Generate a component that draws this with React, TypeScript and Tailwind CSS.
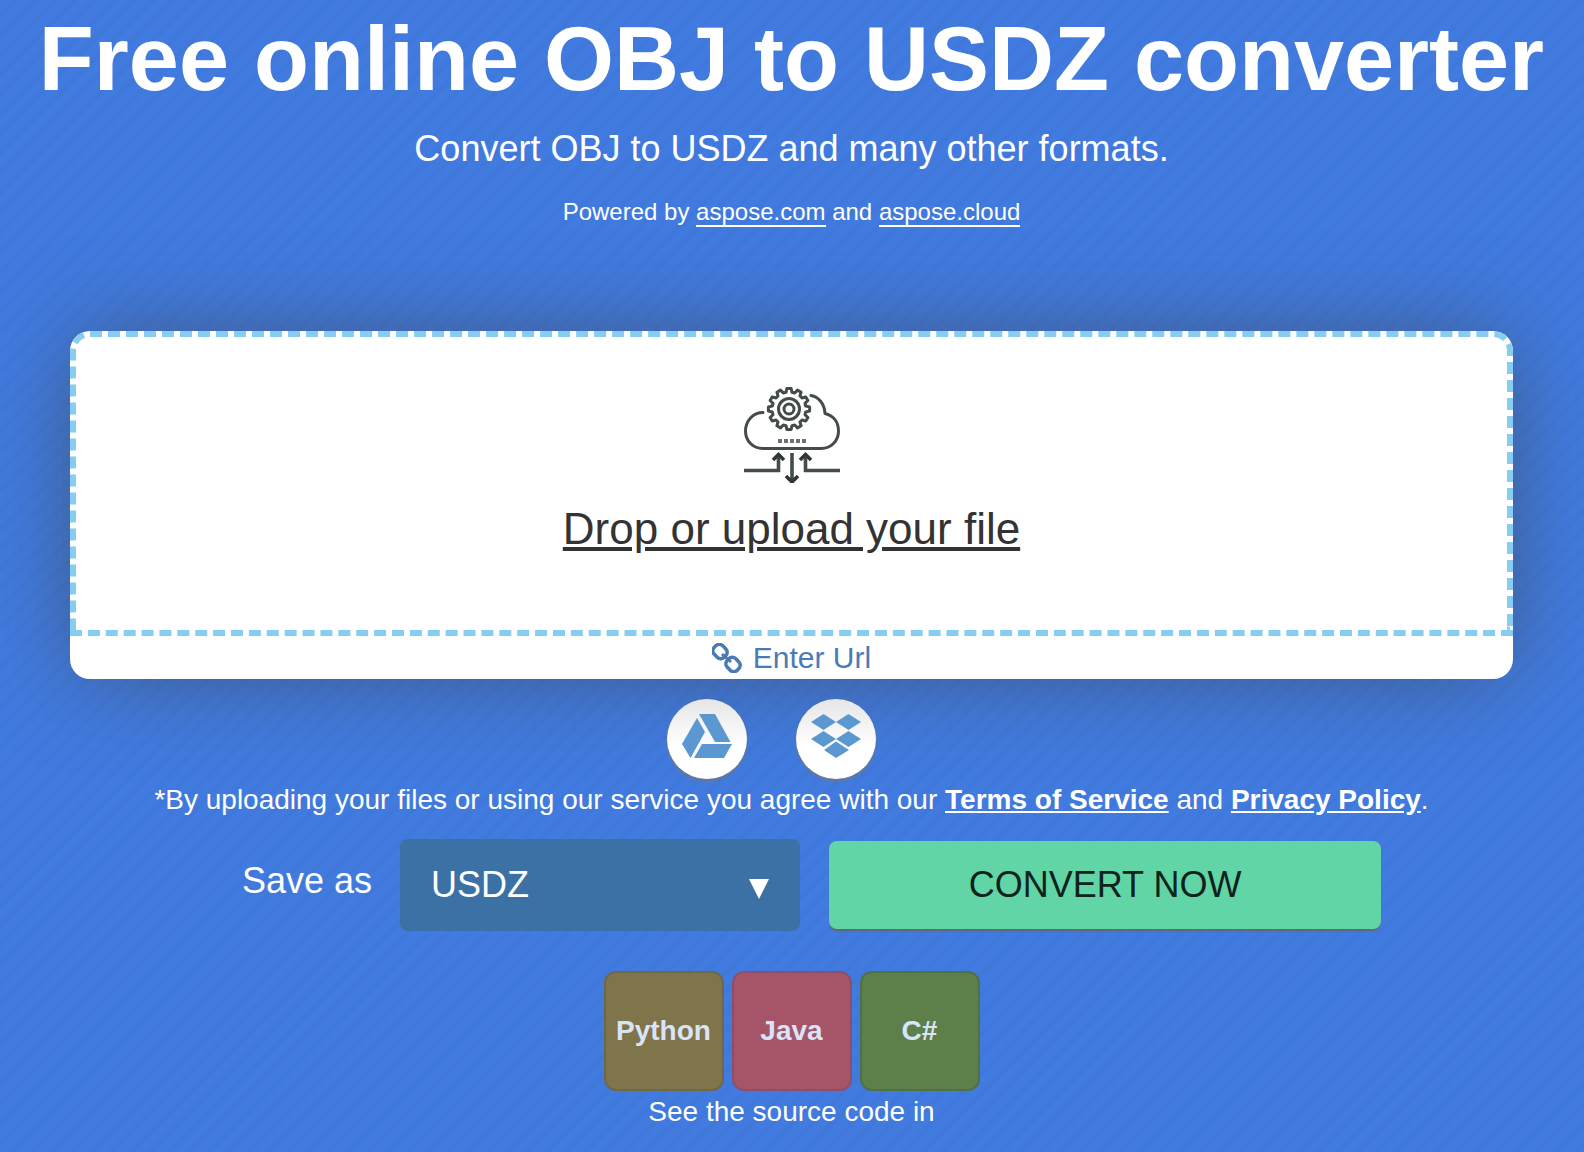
import React from 'react';

const formats = ['USDZ', 'OBJ', 'FBX', 'STL', 'GLB'];

const languages = [
  { name: 'Python', color: 'bg-[#80744a] border-[#6e6748]' },
  { name: 'Java', color: 'bg-[#a65568] border-[#8d4f68]' },
  { name: 'C#', color: 'bg-[#5d7f4a] border-[#507048]' },
];

// Outline of the gear that sits on top of the cloud
const gearPath = () => {
  const teeth = 12;
  const points: string[] = [];
  for (let i = 0; i < teeth; i++) {
    const base = (i * 2 * Math.PI) / teeth - Math.PI / 2;
    [[-0.18, 17], [-0.1, 20.7], [0.1, 20.7], [0.18, 17]].forEach(([offset, radius]) => {
      const x = 45 + radius * Math.cos(base + offset);
      const y = 22 + radius * Math.sin(base + offset);
      points.push(`${x.toFixed(1)} ${y.toFixed(1)}`);
    });
  }
  return `M${points.join('L')}Z`;
};

const CloudIcon = () => (
  <svg viewBox="0 0 96 96" className="h-24 w-24" fill="none" stroke="#434c4a" strokeWidth="3">
    <path d={gearPath()} strokeLinejoin="round" />
    <circle cx="45" cy="22" r="10.5" />
    <circle cx="45" cy="22" r="5" />
    <path
      d="M19 25.5C9 25.5 1.5 34 1.5 44C1.5 54 9 61.5 19 61.5H77C87 61.5 94.5 54 94.5 44C94.5 34.5 89 28.5 81 26.5C80.5 17 75 10 67 8.5"
      strokeLinecap="round"
      strokeLinejoin="round"
    />
    <path d="M34 54H63" stroke="#6b7270" strokeWidth="4" strokeDasharray="4 2" />
    <path d="M0 83.5H34.5V69M96 83.5H61.5V69M48 66V93" strokeWidth="3.6" />
    <path
      d="M29 73L34.5 67.5L40 73M56 73L61.5 67.5L67 73M42 89L48 95L54 89"
      stroke="#2f3836"
      strokeWidth="3.6"
    />
  </svg>
);

const LinkIcon = () => (
  <svg viewBox="0 0 30 30" className="h-[30px] w-[30px]" fill="none" stroke="#4a7bb5" strokeWidth="3.6">
    <rect x="1" y="2.5" width="14" height="12" rx="5" transform="rotate(45 8 8.5)" />
    <rect x="14" y="15.5" width="14" height="12" rx="5" transform="rotate(45 21 21.5)" />
    <path d="M10 11L19 19" strokeWidth="3" />
  </svg>
);

const DriveIcon = () => (
  <svg viewBox="0 0 50 44" className="h-11 w-[50px]" fill="#5b98d2">
    <path d="M17 0H33L48.5 28H33Z" />
    <path d="M15 4L23 18L8.5 44L0 30Z" />
    <path d="M20 30H50L42 44H12Z" />
  </svg>
);

const DropboxIcon = () => (
  <svg viewBox="0 0 50 44" className="h-11 w-[50px]" fill="#5b98d2">
    <path d="M12.5 0L25 8L12.5 16L0 8ZM37.5 0L50 8L37.5 16L25 8ZM12.5 17L25 25L12.5 33L0 25ZM37.5 17L50 25L37.5 33L25 25ZM25 27.5L38 36L25 44L13 36Z" />
  </svg>
);

const cloudButton =
  'flex h-20 w-20 items-center justify-center rounded-full bg-linear-to-b from-[#e6e6e6] to-white to-60% pb-[6px] shadow-[0_2px_3px_#777]';

const App: React.FC = () => {
  return (
    <main className="flex min-h-screen flex-col items-center bg-[#417bdf] bg-[repeating-linear-gradient(135deg,transparent_0_7px,rgba(0,0,0,0.025)_10px_12px,transparent_14px)] pt-[7px] pr-px font-['Liberation_Sans',Arial,sans-serif] text-white">
      <h1 className="text-center text-[90px] leading-[104px] font-bold">Free online OBJ to USDZ converter</h1>
      <p className="mt-4 text-center text-[36px] leading-11">Convert OBJ to USDZ and many other formats.</p>
      <p className="mt-[27px] text-center text-2xl leading-7">
        Powered by{' '}
        <a href="#com" className="border-b-2 border-white">aspose.com</a> and{' '}
        <a href="#cloud" className="border-b-2 border-white">aspose.cloud</a>
      </p>

      <section className="mt-[105px] w-full px-[70px]">
        <div className="overflow-hidden rounded-[20px] bg-white shadow-[0_0_90px_-8px_rgba(62,62,62,0.6)]">
          <label className="flex h-[305px] cursor-pointer flex-col items-center rounded-t-[20px] border-6 border-dashed border-[#86cdf1] pt-[50px]">
            <CloudIcon />
            <span className="mt-5 text-[44px] leading-[52px] text-[#333] underline">Drop or upload your file</span>
            <input type="file" className="sr-only" />
          </label>
          <button type="button" className="flex h-[43px] w-full items-center justify-center gap-[11px] text-[30px] text-[#4a7bb5]">
            <LinkIcon />
            Enter Url
          </button>
        </div>
      </section>

      <div className="mt-5 flex gap-[49px] pr-10">
        <button type="button" aria-label="Google Drive" className={cloudButton}><DriveIcon /></button>
        <button type="button" aria-label="Dropbox" className={cloudButton}><DropboxIcon /></button>
      </div>

      <p className="mt-[5px] text-center text-[28px] leading-8">
        *By uploading your files or using our service you agree with our{' '}
        <a href="#terms" className="font-bold underline">Terms of Service</a> and{' '}
        <a href="#privacy" className="font-bold underline">Privacy Policy</a>.
      </p>

      <div className="mt-[23px] flex w-full items-center pr-[202px] pl-[242px]">
        <label htmlFor="format" className="mr-7 pb-2 text-[36px] whitespace-nowrap">Save as</label>
        <div className="relative w-[400px]">
          <select id="format" className="h-[92px] w-full appearance-none rounded-lg bg-[#3b71a4] px-[31px] text-[36px]">
            {formats.map((format) => (
              <option key={format}>{format}</option>
            ))}
          </select>
          <svg viewBox="0 0 20 20" className="pointer-events-none absolute top-10 right-[31px] h-5 w-5" fill="white">
            <path d="M0 0H20L10 20Z" />
          </svg>
        </div>
        <button type="button" className="ml-[29px] h-[88px] flex-1 rounded-lg bg-[#62d5a7] text-[36px] text-[#0f231c] shadow-[0_3px_2px_-1px_#666]">
          CONVERT NOW
        </button>
      </div>

      <div className="mt-10 flex gap-2">
        {languages.map(({ name, color }) => (
          <button key={name} type="button" className={`h-[120px] w-[120px] rounded-xl border-2 text-[28px] font-bold text-[#dae4f8] ${color}`}>
            {name}
          </button>
        ))}
      </div>
      <p className="mt-[3px] text-[28px] leading-9">See the source code in</p>
    </main>
  );
};

export default App;
